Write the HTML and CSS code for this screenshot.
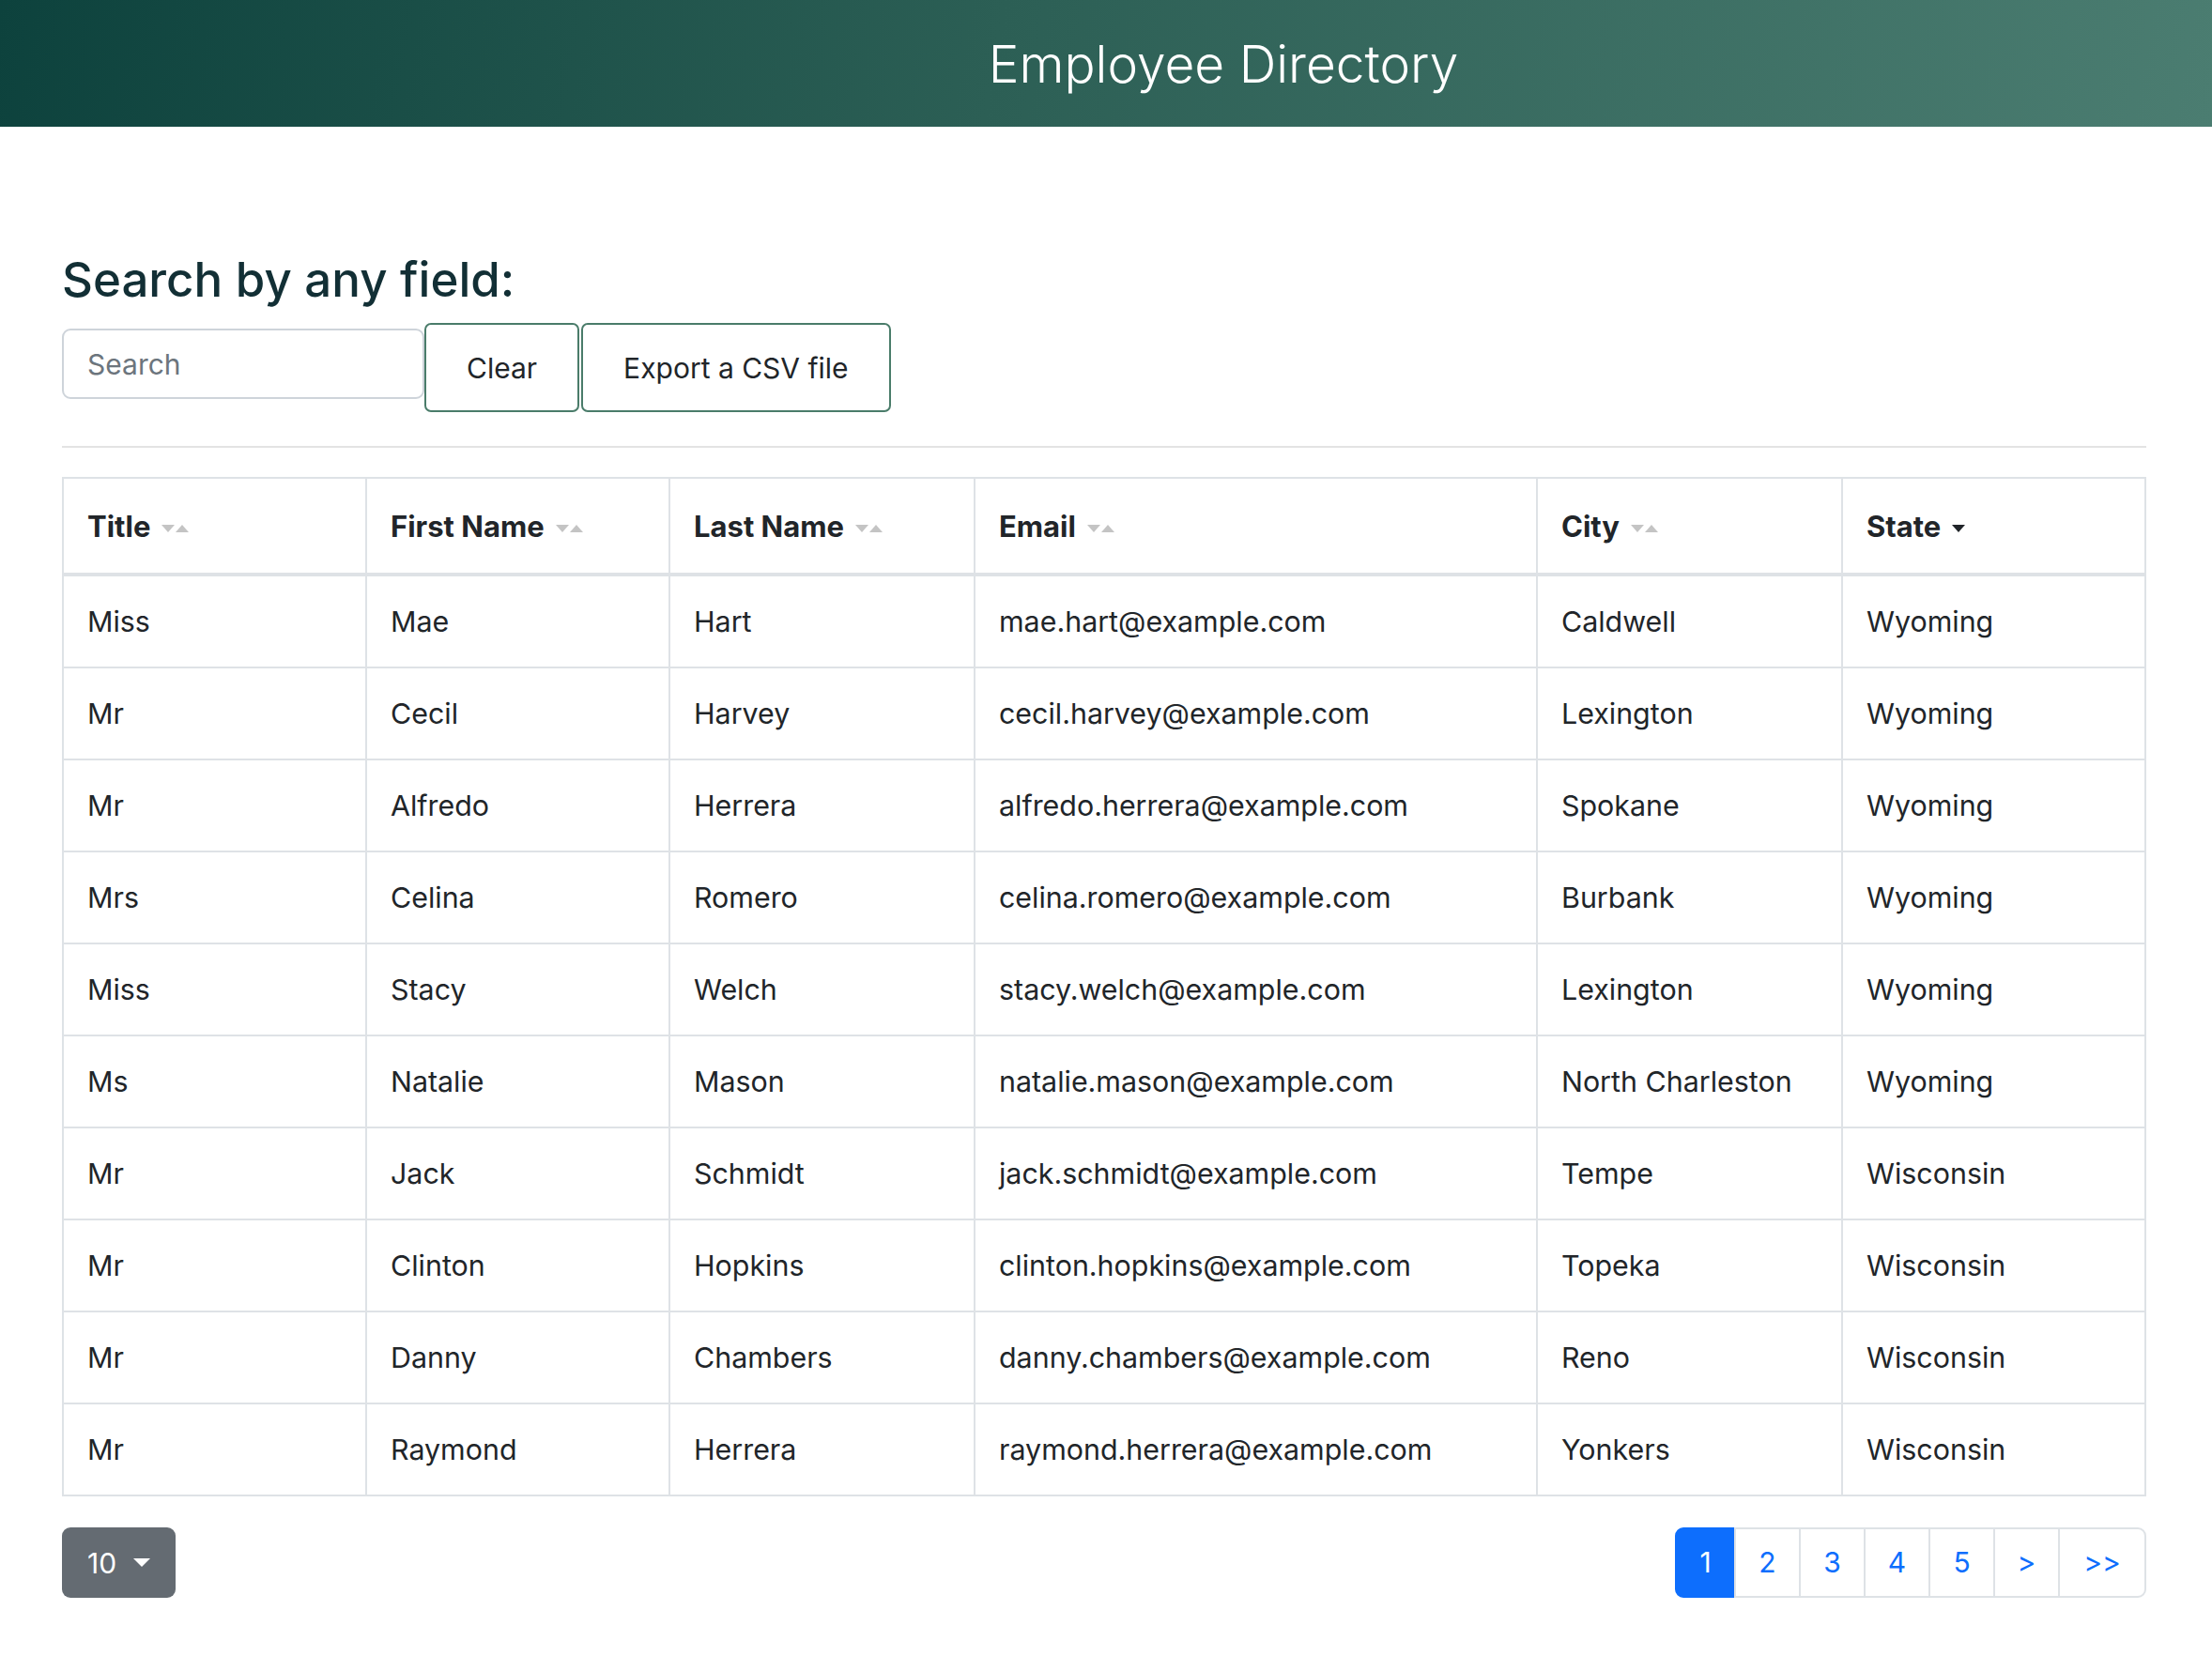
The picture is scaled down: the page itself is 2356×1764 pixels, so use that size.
FILE: index.html
```html
<!DOCTYPE html>
<html lang="en">
<head>
<meta charset="utf-8">
<title>Employee Directory</title>
<link rel="stylesheet" href="styles.css">
</head>
<body>
<header class="topbar">
  <h1 class="topbar-title">Employee Directory</h1>
</header>
<main class="content">
  <h2 class="search-heading">Search by any field:</h2>
  <div class="search-row">
    <input class="search-input" type="text" placeholder="Search">
    <button class="btn-outline btn-clear">Clear</button>
    <button class="btn-outline btn-export">Export a CSV file</button>
  </div>
  <hr class="divider">
  <table class="dir-table">
    <colgroup>
      <col class="c-title"><col class="c-first"><col class="c-last"><col class="c-email"><col class="c-city"><col class="c-state">
    </colgroup>
    <thead>
      <tr>
        <th>Title<span class="sort"><i class="tri-down"></i><i class="tri-up"></i></span></th>
        <th>First Name<span class="sort"><i class="tri-down"></i><i class="tri-up"></i></span></th>
        <th>Last Name<span class="sort"><i class="tri-down"></i><i class="tri-up"></i></span></th>
        <th>Email<span class="sort"><i class="tri-down"></i><i class="tri-up"></i></span></th>
        <th>City<span class="sort"><i class="tri-down"></i><i class="tri-up"></i></span></th>
        <th>State<span class="sort sort-active"><i class="tri-down dark"></i></span></th>
      </tr>
    </thead>
    <tbody>
      <tr><td>Miss</td><td>Mae</td><td>Hart</td><td>mae.hart@example.com</td><td>Caldwell</td><td>Wyoming</td></tr>
      <tr><td>Mr</td><td>Cecil</td><td>Harvey</td><td>cecil.harvey@example.com</td><td>Lexington</td><td>Wyoming</td></tr>
      <tr><td>Mr</td><td>Alfredo</td><td>Herrera</td><td>alfredo.herrera@example.com</td><td>Spokane</td><td>Wyoming</td></tr>
      <tr><td>Mrs</td><td>Celina</td><td>Romero</td><td>celina.romero@example.com</td><td>Burbank</td><td>Wyoming</td></tr>
      <tr><td>Miss</td><td>Stacy</td><td>Welch</td><td>stacy.welch@example.com</td><td>Lexington</td><td>Wyoming</td></tr>
      <tr><td>Ms</td><td>Natalie</td><td>Mason</td><td>natalie.mason@example.com</td><td>North Charleston</td><td>Wyoming</td></tr>
      <tr><td>Mr</td><td>Jack</td><td>Schmidt</td><td>jack.schmidt@example.com</td><td>Tempe</td><td>Wisconsin</td></tr>
      <tr><td>Mr</td><td>Clinton</td><td>Hopkins</td><td>clinton.hopkins@example.com</td><td>Topeka</td><td>Wisconsin</td></tr>
      <tr><td>Mr</td><td>Danny</td><td>Chambers</td><td>danny.chambers@example.com</td><td>Reno</td><td>Wisconsin</td></tr>
      <tr><td>Mr</td><td>Raymond</td><td>Herrera</td><td>raymond.herrera@example.com</td><td>Yonkers</td><td>Wisconsin</td></tr>
    </tbody>
  </table>
  <div class="table-footer">
    <button class="page-size">10<span class="caret"></span></button>
    <ul class="pagination">
      <li class="page active">1</li>
      <li class="page">2</li>
      <li class="page">3</li>
      <li class="page">4</li>
      <li class="page">5</li>
      <li class="page">&gt;</li>
      <li class="page page-wide">&gt;&gt;</li>
    </ul>
  </div>
</main>
</body>
</html>
```
FILE: styles.css
```css
* { box-sizing: border-box; }
html, body { margin: 0; padding: 0; background: #fff; }
body {
  font-family: Inter, "Noto Sans", "Liberation Sans", sans-serif;
  color: #212529;
  font-size: 30px;
  line-height: 45px;
}
.topbar {
  height: 135px;
  display: flex;
  align-items: center;
  justify-content: center;
  padding-left: 250px;
  background: linear-gradient(100deg, #0d423d 0%, #2c5f55 45%, #4b7d71 100%);
}
.topbar-title {
  margin: 0;
  color: #fff;
  font-weight: 300;
  font-size: 55px;
  line-height: 66px;
}
.content {
  padding: 0 70px 0 66px;
}
.search-heading {
  margin: 133px 0 0;
  font-size: 51px;
  line-height: 60px;
  font-weight: 500;
  color: #122f35;
}
.search-row {
  display: flex;
  align-items: flex-start;
  margin-top: 16px;
}
.search-input {
  margin-top: 6px;
  width: 386px;
  height: 75px;
  border: 2px solid #ced4da;
  border-radius: 9px;
  padding: 0 25px;
  font-family: inherit;
  font-size: 30px;
  color: #212529;
  background: #fff;
}
.search-input::placeholder { color: #6c757d; }
.btn-outline {
  height: 95px;
  padding: 0 43px;
  border: 2px solid #4a7c6a;
  border-radius: 7px;
  background: #fff;
  font-family: inherit;
  font-size: 30px;
  color: #212529;
}
.btn-clear { margin-left: 0; }
.btn-export { margin-left: 2px; padding: 0 43px; }
.divider {
  margin: 36px 0 0;
  border: 0;
  border-top: 2px solid #e3e3e3;
}
.dir-table {
  margin-top: 31px;
  width: 100%;
  border-collapse: collapse;
  table-layout: fixed;
  border: 2px solid #dee2e6;
  font-size: 30.4px;
}
.c-title { width: 323px; }
.c-first { width: 323px; }
.c-last { width: 325px; }
.c-email { width: 599px; }
.c-city { width: 325px; }
.dir-table th, .dir-table td {
  border: 2px solid #dee2e6;
  text-align: left;
  white-space: nowrap;
  line-height: 45px;
}
.dir-table th {
  padding: 28px 25px 27px;
  font-weight: 700;
  font-size: 31px;
  border-bottom: 4px solid #dee2e6;
}
.dir-table td { padding: 26px 25px 25px; }
.sort {
  display: inline-flex;
  align-items: center;
  margin-left: 12px;
  vertical-align: 5px;
}
.tri-down, .tri-up {
  display: inline-block;
  width: 0;
  height: 0;
  border-left: 7px solid transparent;
  border-right: 7px solid transparent;
}
.tri-down { border-top: 8px solid #c4c4c4; }
.tri-up { border-bottom: 8px solid #c4c4c4; margin-left: 1px; }
.tri-down.dark { border-top-color: #212529; }
.table-footer {
  display: flex;
  justify-content: space-between;
  align-items: center;
  margin-top: 33px;
  padding-bottom: 40px;
}
.page-size {
  height: 75px;
  padding: 0 27px;
  border: 0;
  border-radius: 9px;
  background: #646b72;
  color: #fff;
  font-family: inherit;
  font-size: 30px;
  display: flex;
  align-items: center;
}
.caret {
  display: inline-block;
  margin-left: 18px;
  border-top: 9px solid #fff;
  border-left: 9px solid transparent;
  border-right: 9px solid transparent;
}
.pagination {
  display: flex;
  margin: 0;
  padding: 0;
  list-style: none;
}
.page {
  height: 75px;
  min-width: 71px;
  padding: 0 20px;
  display: flex;
  align-items: center;
  justify-content: center;
  border: 2px solid #dee2e6;
  margin-left: -2px;
  color: #0d6efd;
  font-size: 30px;
  background: #fff;
}
.page:first-child { border-radius: 9px 0 0 9px; margin-left: 0; }
.page:last-child { border-radius: 0 9px 9px 0; }
.page.active {
  background: #0d6efd;
  border-color: #0d6efd;
  color: #fff;
  min-width: 65px;
}
.page-wide { min-width: 94px; }
```
